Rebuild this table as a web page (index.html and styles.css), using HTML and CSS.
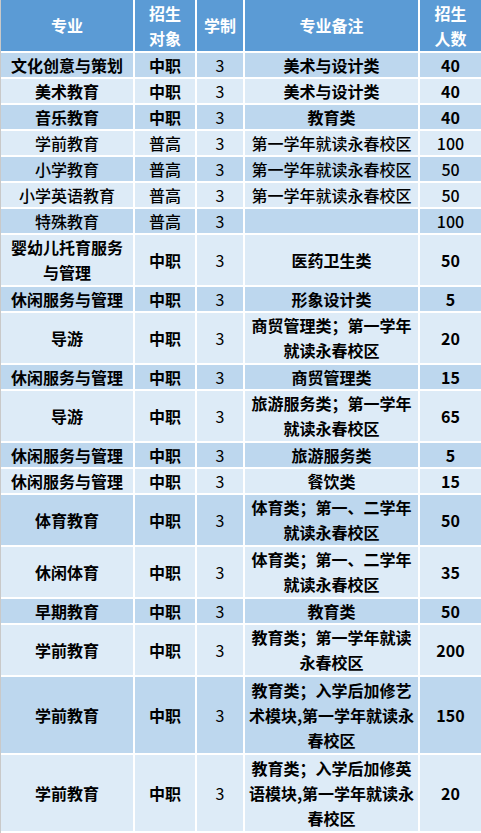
FILE: index.html
```html
<!DOCTYPE html>
<html lang="zh-CN">
<head>
<meta charset="utf-8">
<title>招生计划</title>
<link rel="stylesheet" href="styles.css">
</head>
<body>
<table class="plan">
  <colgroup>
    <col class="c-major">
    <col class="c-target">
    <col class="c-years">
    <col class="c-note">
    <col class="c-count">
  </colgroup>
  <thead>
    <tr class="head">
      <th>专业</th>
      <th>招生<br>对象</th>
      <th>学制</th>
      <th>专业备注</th>
      <th>招生<br>人数</th>
    </tr>
  </thead>
  <tbody>
    <tr class="h1"><td>文化创意与策划</td><td>中职</td><td class="yr">3</td><td>美术与设计类</td><td>40</td></tr>
    <tr class="h1"><td>美术教育</td><td>中职</td><td class="yr">3</td><td>美术与设计类</td><td>40</td></tr>
    <tr class="h1"><td>音乐教育</td><td>中职</td><td class="yr">3</td><td>教育类</td><td>40</td></tr>
    <tr class="h1 light"><td>学前教育</td><td>普高</td><td class="yr">3</td><td>第一学年就读永春校区</td><td>100</td></tr>
    <tr class="h1 light"><td>小学教育</td><td>普高</td><td class="yr">3</td><td>第一学年就读永春校区</td><td>50</td></tr>
    <tr class="h1 light"><td>小学英语教育</td><td>普高</td><td class="yr">3</td><td>第一学年就读永春校区</td><td>50</td></tr>
    <tr class="h1 light"><td>特殊教育</td><td>普高</td><td class="yr">3</td><td></td><td>100</td></tr>
    <tr class="h2"><td>婴幼儿托育服务<br>与管理</td><td>中职</td><td class="yr">3</td><td>医药卫生类</td><td>50</td></tr>
    <tr class="h1"><td>休闲服务与管理</td><td>中职</td><td class="yr">3</td><td>形象设计类</td><td>5</td></tr>
    <tr class="h2"><td>导游</td><td>中职</td><td class="yr">3</td><td>商贸管理类；第一学年就读永春校区</td><td>20</td></tr>
    <tr class="h1"><td>休闲服务与管理</td><td>中职</td><td class="yr">3</td><td>商贸管理类</td><td>15</td></tr>
    <tr class="h2"><td>导游</td><td>中职</td><td class="yr">3</td><td>旅游服务类；第一学年就读永春校区</td><td>65</td></tr>
    <tr class="h1"><td>休闲服务与管理</td><td>中职</td><td class="yr">3</td><td>旅游服务类</td><td>5</td></tr>
    <tr class="h1"><td>休闲服务与管理</td><td>中职</td><td class="yr">3</td><td>餐饮类</td><td>15</td></tr>
    <tr class="h2"><td>体育教育</td><td>中职</td><td class="yr">3</td><td>体育类；第一、二学年就读永春校区</td><td>50</td></tr>
    <tr class="h2"><td>休闲体育</td><td>中职</td><td class="yr">3</td><td>体育类；第一、二学年就读永春校区</td><td>35</td></tr>
    <tr class="h1"><td>早期教育</td><td>中职</td><td class="yr">3</td><td>教育类</td><td>50</td></tr>
    <tr class="h2"><td>学前教育</td><td>中职</td><td class="yr">3</td><td>教育类；第一学年就读永春校区</td><td>200</td></tr>
    <tr class="h3"><td>学前教育</td><td>中职</td><td class="yr">3</td><td>教育类；入学后加修艺术模块,第一学年就读永春校区</td><td>150</td></tr>
    <tr class="h3"><td>学前教育</td><td>中职</td><td class="yr">3</td><td>教育类；入学后加修英语模块,第一学年就读永春校区</td><td>20</td></tr>
  </tbody>
</table>
</body>
</html>
```

FILE: styles.css
```css
html, body {
  margin: 0;
  padding: 0;
  background: #ffffff;
}

.plan {
  width: 481px;
  table-layout: fixed;
  border-collapse: separate;
  border-spacing: 0;
  border-left: 1px solid #c9c9c9;
  font-family: "Noto Sans CJK SC", "Microsoft YaHei", sans-serif;
  font-size: 16px;
  color: #000000;
}

.c-major { width: 134px; }
.c-target { width: 62px; }
.c-years { width: 48px; }
.c-note { width: 175px; }
.c-count { width: 61px; }

.plan th,
.plan td {
  padding: 0 2px;
  border-right: 2px solid #ffffff;
  border-bottom: 2px solid #ffffff;
  text-align: center;
  vertical-align: middle;
  line-height: 25px;
  font-weight: 700;
  overflow: hidden;
}

.plan th:last-child,
.plan td:last-child {
  border-right: 0;
}

.head th {
  height: 51px;
  background: #5b9bd5;
  color: #ffffff;
  font-size: 16px;
  font-weight: 700;
}

.plan tbody tr:nth-child(odd) td { background: #bdd7ee; }
.plan tbody tr:nth-child(even) td { background: #ddebf7; }

.h1 td { height: 24px; line-height: 24px; }
.h2 td { height: 50px; }
.h3 td { height: 76px; }

.plan td.yr { font-weight: 400; }
.light td { font-weight: 500; }
```
